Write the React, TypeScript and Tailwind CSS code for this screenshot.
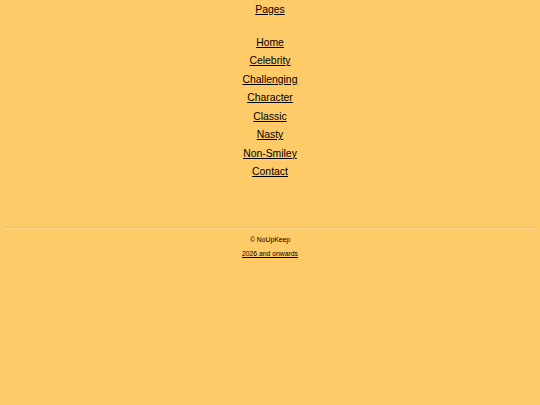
const LINKS = ["Home", "Celebrity", "Challenging", "Character", "Classic", "Nasty", "Non-Smiley", "Contact"];

export default function App() {
  return (
    <div
      className="min-h-screen bg-[#ffca68] text-black"
      style={{ fontFamily: '"Liberation Sans", Arial, sans-serif' }}
    >
      <nav className="flex flex-col items-center pt-[1px]">
        <a href="#" className="text-[10.4px] leading-[18px] underline">
          Pages
        </a>
        <ul className="mt-[14.75px] flex flex-col items-center">
          {LINKS.map((l) => (
            <li key={l} className="text-[10.4px] leading-[18.5px]">
              <a href="#" className="underline">
                {l}
              </a>
            </li>
          ))}
        </ul>
      </nav>
      <hr className="mx-[4px] mt-[45px] border-t border-b border-t-[#e9bc66] border-b-[#ffd98e]" />
      <footer className="mt-[4px] flex flex-col items-center text-[6.8px] leading-[14px]">
        <span>© NoUpKeep</span>
        <a href="#" className="underline">
          2026 and onwards
        </a>
      </footer>
    </div>
  );
}
